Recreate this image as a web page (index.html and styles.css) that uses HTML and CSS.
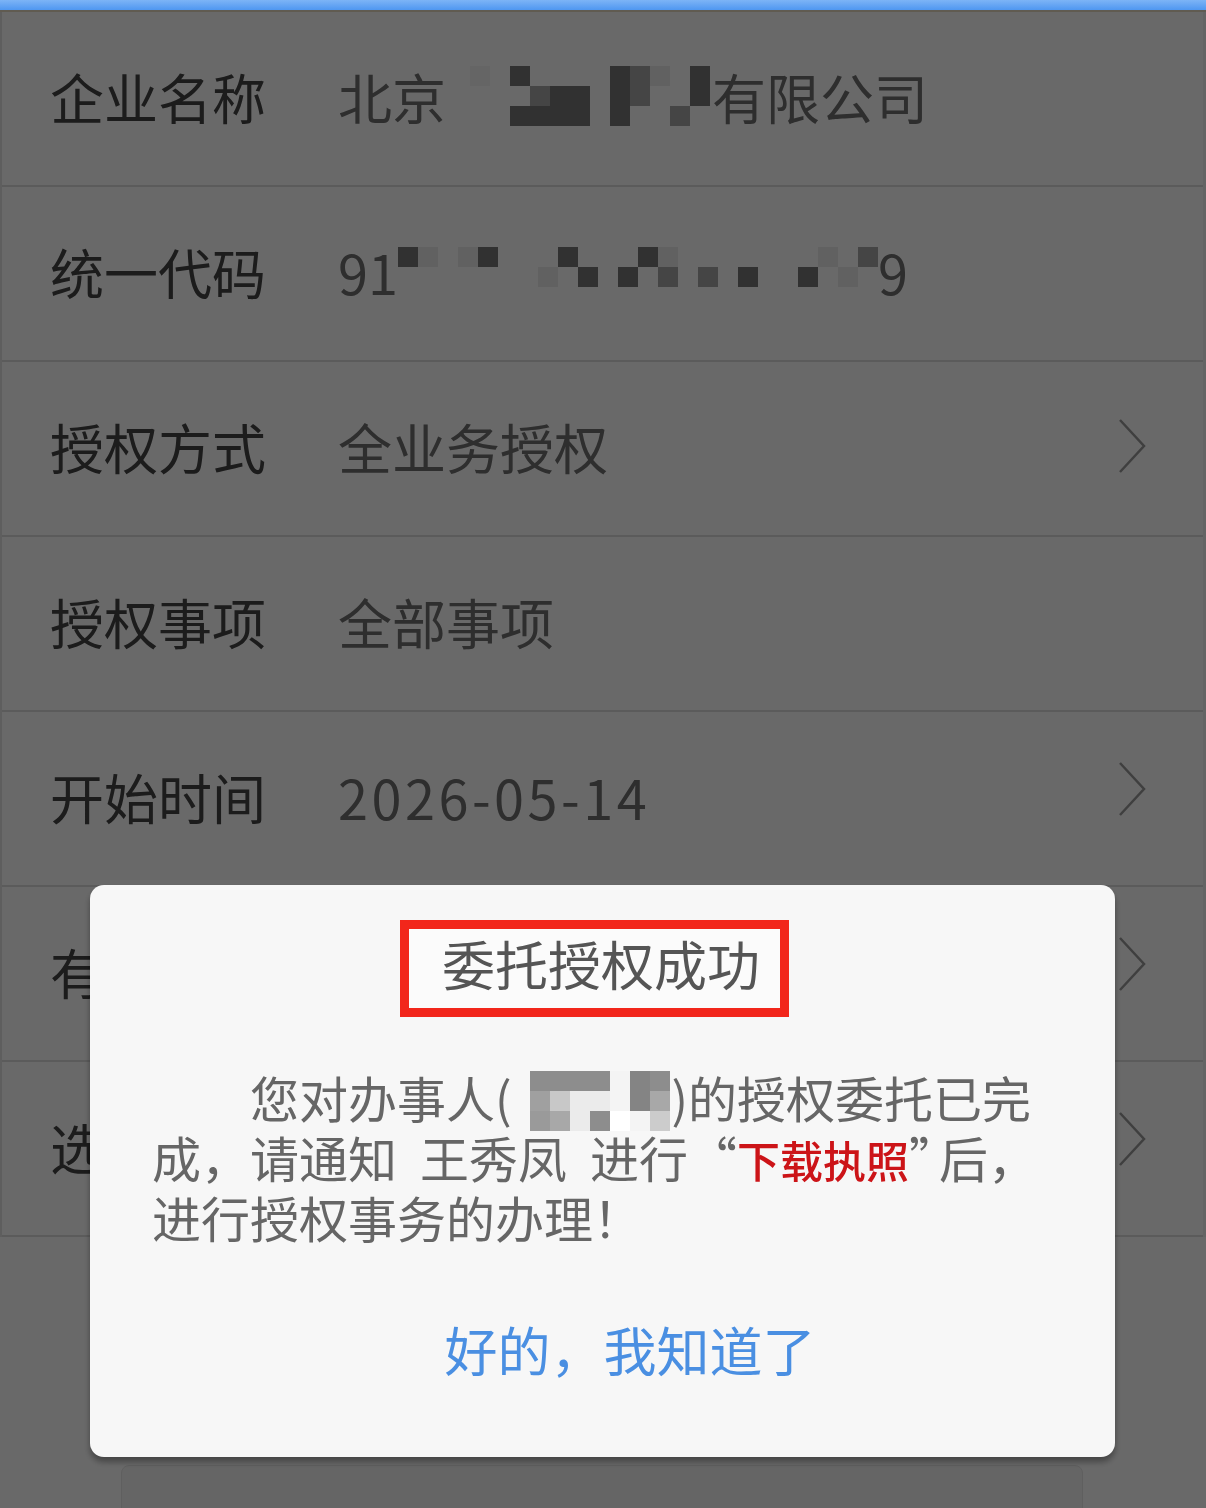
FILE: index.html
```html
<!DOCTYPE html>
<html lang="zh-CN">
<head>
<meta charset="utf-8">
<title>委托授权</title>
<link rel="stylesheet" href="styles.css">
</head>
<body>
<div class="topbar"></div>
<div class="topline"></div>
<main class="list">
  <div class="row">
    <span class="label">企业名称</span>
    <div class="value">
      <span>北京</span>
      <span class="mosaic m-name">
        <i></i><i class="f"></i><i></i><i class="d"></i><i></i><i></i><i></i><i></i><i class="d"></i><i class="m"></i><i class="l"></i><i></i><i class="d"></i>
        <i></i><i></i><i></i><i></i><i class="m"></i><i class="d"></i><i class="d"></i><i></i><i class="d"></i><i class="m"></i><i></i><i></i><i class="d"></i>
        <i></i><i></i><i></i><i class="d"></i><i class="d"></i><i class="d"></i><i class="d"></i><i></i><i class="d"></i><i></i><i></i><i class="m"></i><i></i>
      </span>
      <span>有限公司</span>
    </div>
  </div>
  <div class="row">
    <span class="label">统一代码</span>
    <div class="value">
      <span>91</span>
      <span class="mosaic m-code">
        <i class="d"></i><i class="l"></i><i></i><i class="l"></i><i class="d"></i><i></i><i></i><i></i><i class="d"></i><i></i><i></i><i></i><i class="d"></i><i class="l"></i><i></i><i></i><i></i><i></i><i></i><i></i><i></i><i class="l"></i><i></i><i class="m"></i>
        <i></i><i></i><i></i><i></i><i></i><i></i><i></i><i class="l"></i><i></i><i class="d"></i><i></i><i class="d"></i><i></i><i class="m"></i><i></i><i class="m"></i><i></i><i class="d"></i><i></i><i></i><i class="d"></i><i></i><i class="l"></i><i></i>
      </span>
      <span>9</span>
    </div>
  </div>
  <div class="row">
    <span class="label">授权方式</span>
    <div class="value">全业务授权</div>
    <svg class="chev" viewBox="0 0 30 56"><polyline points="3,2 27,28 3,54"/></svg>
  </div>
  <div class="row">
    <span class="label">授权事项</span>
    <div class="value">全部事项</div>
  </div>
  <div class="row">
    <span class="label">开始时间</span>
    <div class="value date">2026-05-14</div>
    <svg class="chev raised" viewBox="0 0 30 56"><polyline points="3,2 27,28 3,54"/></svg>
  </div>
  <div class="row">
    <span class="label">有效期限</span>
    <div class="value">长期有效</div>
    <svg class="chev raised" viewBox="0 0 30 56"><polyline points="3,2 27,28 3,54"/></svg>
  </div>
  <div class="row">
    <span class="label">选择人员</span>
    <div class="value">王秀凤</div>
    <svg class="chev raised" viewBox="0 0 30 56"><polyline points="3,2 27,28 3,54"/></svg>
  </div>
</main>
<div class="footer-card"></div>

<div class="mask"></div>
<div class="dialog">
  <div class="title-box">委托授权成功</div>
  <div class="msg">
    <p class="first">您对办事人(<span class="mosaic m-person"><i class="g1"></i><i class="g1"></i><i class="g1"></i><i class="g1"></i><i class="g2"></i><i class="g6"></i><i class="g1"></i><i class="g3"></i><i class="g4"></i><i class="g5"></i><i class="g5"></i><i class="g2"></i><i class="g6"></i><i class="g9"></i><i class="g7"></i><i class="g9"></i><i class="g5"></i><i class="g1"></i><i class="g0"></i><i class="g2"></i><i class="g8"></i></span>)的授权委托已完</p>
    <p class="second">成，请通知 王秀凤 进行“<span class="red">下载执照</span><span class="rq">”</span>后，</p>
    <p>进行授权事务的办理！</p>
  </div>
  <div class="ok">好的，我知道了</div>
</div>
</body>
</html>
```

FILE: styles.css
```css
html, body {
  margin: 0;
  height: 100%;
  overflow: hidden;
}

body {
  width: 1206px;
  background: #ffffff;
  font-family: "Noto Sans CJK SC", "Noto Sans", sans-serif;
}

.topbar {
  position: relative;
  z-index: 30;
  height: 10px;
  background: linear-gradient(#7db4f6, #4f97f1);
}

.topline {
  height: 2px;
  background: #e8dcc6;
}

.list {
  border-left: 2px solid #e4e4e4;
  border-right: 3px solid #f2f2f2;
}

.row {
  display: flex;
  align-items: center;
  box-sizing: border-box;
  height: 175px;
  border-bottom: 2px solid #dedede;
  padding: 0 56px 5px 48px;
}

.label {
  flex: none;
  width: 288px;
  font-size: 54px;
  color: #444444;
  white-space: nowrap;
  overflow: hidden;
}

.value {
  flex: 1;
  display: flex;
  align-items: center;
  font-size: 54px;
  color: #707070;
  white-space: nowrap;
}

.date {
  letter-spacing: 3.5px;
}

.chev {
  flex: none;
  width: 30px;
  height: 56px;
}

.chev.raised {
  margin-bottom: 14px;
}

.chev polyline {
  fill: none;
  stroke: #9a9a9a;
  stroke-width: 2.5;
}

.mosaic {
  display: inline-grid;
  grid-auto-rows: 20px;
}

.mosaic i {
  display: block;
}

.m-name {
  grid-template-columns: repeat(13, 20px);
  margin: 0 2px 0 4px;
}

.m-code {
  grid-template-columns: repeat(24, 20px);
  margin-bottom: 8px;
}

.mosaic i.d { background: #777777; }
.mosaic i.m { background: #a8a8a8; }
.mosaic i.l { background: #ececec; }
.mosaic i.f { background: #f6f6f6; }

.footer-card {
  margin: 228px 0 0 121px;
  width: 960px;
  height: 60px;
  background: #f5f5f5;
  border: 1px solid #e6e6e6;
  border-radius: 8px 8px 0 0;
}

.mask {
  position: fixed;
  inset: 0;
  z-index: 10;
  background: rgba(0, 0, 0, 0.59);
}

.dialog {
  position: fixed;
  left: 90px;
  top: 885px;
  z-index: 20;
  width: 1025px;
  height: 572px;
  box-sizing: border-box;
  padding-top: 35px;
  display: flex;
  flex-direction: column;
  align-items: center;
  background: #f7f7f7;
  border-radius: 14px;
  box-shadow: 0 5px 6px rgba(0, 0, 0, 0.35);
}

.title-box {
  height: 97px;
  box-sizing: border-box;
  margin-right: 16px;
  padding: 0 20px 10px 33px;
  border: 9px solid #f2261b;
  background: #fbfbfb;
  font-size: 53px;
  line-height: 69px;
  color: #555555;
  white-space: nowrap;
}

.msg {
  align-self: stretch;
  margin-top: 50px;
  padding: 0 30px 0 62px;
  font-size: 49px;
  line-height: 60px;
  color: #666666;
  white-space: nowrap;
}

.msg p {
  margin: 0;
  height: 60px;
}

.msg p.first {
  text-indent: 98px;
}

.msg p.second {
  word-spacing: 12px;
}

.rq {
  letter-spacing: -19px;
}

.m-person {
  grid-template-columns: repeat(7, 20px);
  vertical-align: middle;
  margin: -14px 2px -6px 18px;
  text-indent: 0;
}

.m-person i.g0 { background: #ffffff; }
.m-person i.g1 { background: #8d8d8d; }
.m-person i.g2 { background: #f4f4f4; }
.m-person i.g3 { background: #a0a0a0; }
.m-person i.g4 { background: #c8c8c8; }
.m-person i.g5 { background: #ebebeb; }
.m-person i.g6 { background: #848484; }
.m-person i.g7 { background: #9a9a9a; }
.m-person i.g8 { background: #cccccc; }
.m-person i.g9 { background: #a8a8a8; }

.red {
  color: #cc1418;
  font-size: 43px;
  font-weight: 500;
  word-spacing: 0;
}

.ok {
  margin-top: 72px;
  padding-left: 55px;
  font-size: 53px;
  line-height: 60px;
  color: #4a8fe2;
  white-space: nowrap;
}
```
